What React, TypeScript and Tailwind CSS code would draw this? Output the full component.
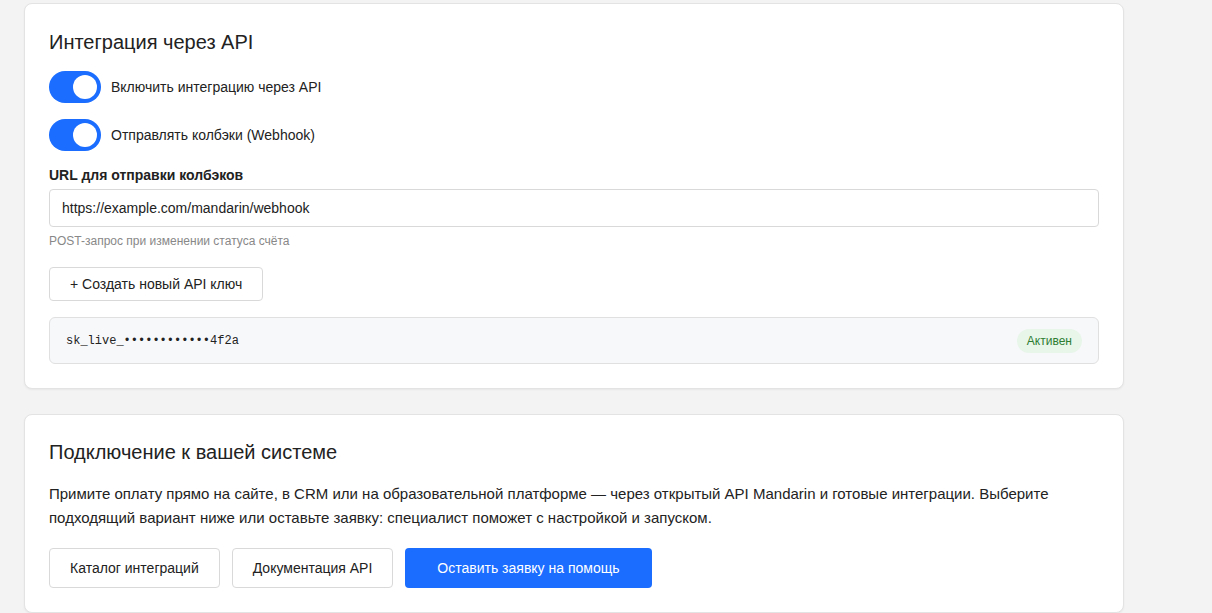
import React from "react";

function Toggle({ label }: { label: string }) {
  return (
    <label className="flex items-center gap-[10px]">
      <span className="flex h-[32px] w-[52px] items-center justify-end rounded-full bg-[#1a6dff] pr-[4px]">
        <span className="h-[24px] w-[24px] rounded-full bg-white" />
      </span>
      <span className="text-[14px] text-[#222]">{label}</span>
    </label>
  );
}

export default function App() {
  return (
    <div
      className="min-h-[613px] bg-[#f3f3f3] pl-[24px] pt-[3px] text-[#222]"
      style={{ fontFamily: '"Liberation Sans", Arial, sans-serif' }}
    >
      <div className="flex w-[1100px] flex-col gap-[25px]">
        <section className="rounded-[8px] border border-[#e3e3e3] bg-white p-[24px] shadow-[0_1px_2px_rgba(0,0,0,0.05)]">
          <h2 className="text-[20px] leading-[28px] text-[#222]">Интеграция через API</h2>
          <div className="mt-[15px] flex flex-col gap-[16px]">
            <Toggle label="Включить интеграцию через API" />
            <Toggle label="Отправлять колбэки (Webhook)" />
          </div>
          <div className="mt-[14px] text-[14px] font-bold leading-[20px]">URL для отправки колбэков</div>
          <div className="mt-[4px] flex h-[38px] items-center rounded-[4px] border border-[#d9d9d9] px-[12px] text-[14px]">
            https://example.com/mandarin/webhook
          </div>
          <div className="mt-[6px] text-[12px] leading-[16px] text-[#888]">POST-запрос при изменении статуса счёта</div>
          <button className="mt-[18px] h-[34px] rounded-[4px] border border-[#d9d9d9] bg-white px-[20px] text-[14px] text-[#222]">
            + Создать новый API ключ
          </button>
          <div className="mt-[16px] flex h-[47px] items-center justify-between rounded-[6px] border border-[#e0e0e0] bg-[#f7f8fa] pl-[16px] pr-[16px]">
            <span className="text-[12px]" style={{ fontFamily: '"Liberation Mono", "DejaVu Sans Mono", monospace' }}>
              sk_live_••••••••••••4f2a
            </span>
            <span className="rounded-full bg-[#e8f6ea] px-[10px] py-[3px] text-[12px] text-[#2e7d32]">Активен</span>
          </div>
        </section>

        <section className="rounded-[8px] border border-[#e3e3e3] bg-white p-[24px] pt-[23px] shadow-[0_1px_2px_rgba(0,0,0,0.05)]">
          <h2 className="text-[20px] leading-[28px] text-[#222]">Подключение к вашей системе</h2>
          <p className="mt-[16px] text-[15px] leading-[24px] text-[#222]">
            Примите оплату прямо на сайте, в CRM или на образовательной платформе — через открытый API Mandarin и готовые интеграции. Выберите подходящий вариант ниже или оставьте заявку: специалист поможет с настройкой и запуском.
          </p>
          <div className="mt-[18px] flex gap-[12px]">
            <button className="h-[40px] rounded-[4px] border border-[#d9d9d9] bg-white px-[20px] text-[14px] text-[#222]">
              Каталог интеграций
            </button>
            <button className="h-[40px] rounded-[4px] border border-[#d9d9d9] bg-white px-[20px] text-[14px] text-[#222]">
              Документация API
            </button>
            <button className="h-[40px] rounded-[4px] bg-[#1a6dff] px-[32px] text-[14px] text-white">
              Оставить заявку на помощь
            </button>
          </div>
        </section>
      </div>
    </div>
  );
}
